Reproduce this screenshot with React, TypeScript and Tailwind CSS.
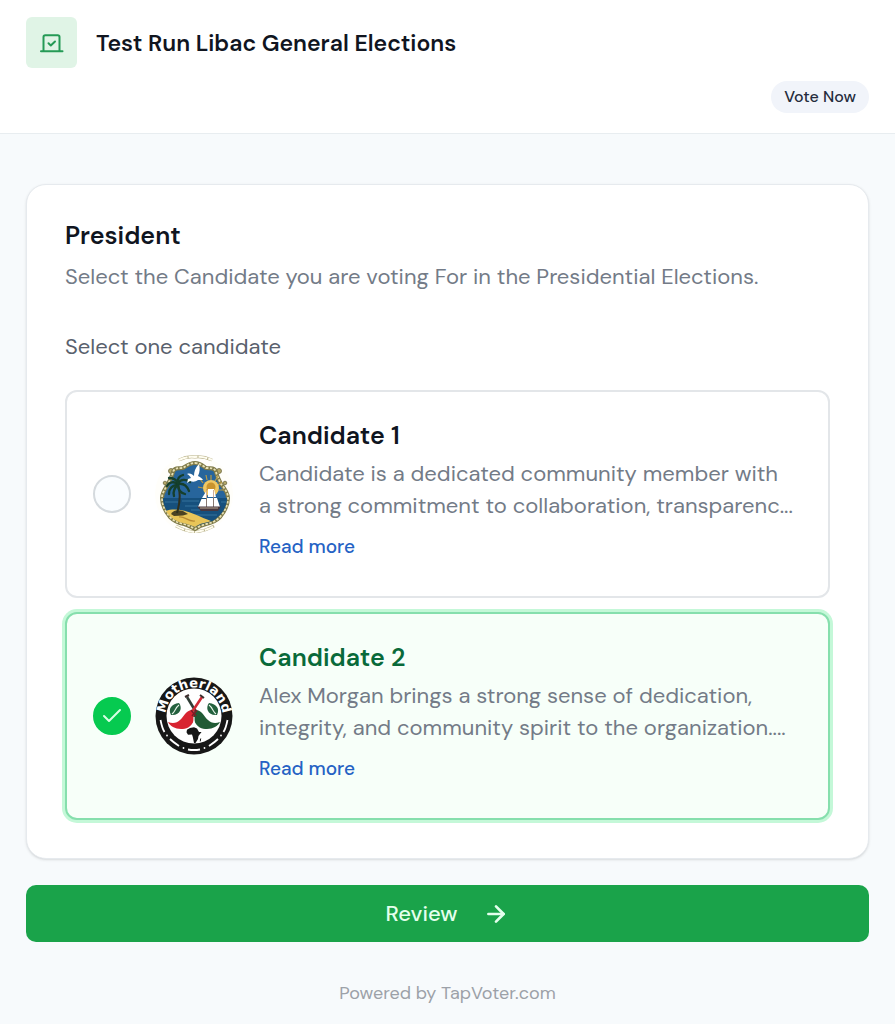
import { useState } from "react";
import type { ReactNode } from "react";
import { ArrowRight, Check } from "lucide-react";

function BallotIcon() {
  return (
    <svg viewBox="0 0 24 24" className="size-6" fill="none" stroke="#259a56" strokeWidth="2" strokeLinecap="round" strokeLinejoin="round" aria-hidden="true">
      <path d="M3.500 20V6a1.800 1.800 0 0 1 1.800-1.800h12.400A1.800 1.800 0 0 1 19.500 6v14" />
      <path d="M1 20.300h21.500" />
      <path d="m8.500 12.300 2.300 2.200 4.200-4" />
    </svg>
  );
}

const crestOutline =
  "M40 8c5 0 8 3 11 5 5 0 9 0 10 4 1 4 3 8 5 12 4 5 7 9 7 14 0 7-3 13-8 19-5 5-9 6-14 7-4 1-8 3-11 5-4-2-7-4-11-5-6-1-10-3-14-7-5-6-8-12-8-19 0-5 3-9 6-14 2-4 4-8 5-12 1-4 5-4 10-4 3-2 7-5 12-5Z";

function CoastEmblem() {
  return (
    <svg viewBox="0 0 78 78" className="size-[78px] shrink-0" role="img" aria-label="Coastal emblem">
      <circle cx="39" cy="39" r="39" fill="#fffefa" />
      <path d="M24 5q8-4 16-3 8-1 17 3M21 71q9 5 19 6 10-1 19-6" fill="none" stroke="#b9b28c" strokeWidth="3" />
      <path d="M24 5q8-4 16-3 8-1 17 3M21 71q9 5 19 6 10-1 19-6" fill="none" stroke="#fffdf0" strokeWidth="2" strokeDasharray="9 1" />
      <g fill="#b5a768" stroke="#6f6b42" strokeWidth="0.800">
        <circle cx="16" cy="16" r="2.500" />
        <circle cx="64" cy="16" r="2.500" />
        <circle cx="10" cy="28" r="1.800" />
        <circle cx="70" cy="28" r="1.800" />
      </g>
      <path d={crestOutline} fill="#27659c" stroke="#7f7a48" strokeWidth="4" />
      <path d={crestOutline} fill="none" stroke="#e6dfb4" strokeWidth="1.800" strokeDasharray="2.500 1.500" />
      <path d="M8 43h64c0 7-3 13-8 18-4 4-8 6-13 7-4 1-8 2-11 4-4-2-7-3-11-4-5-1-9-3-13-7-5-5-8-11-8-18Z" fill="#16507d" />
      <path d="M10 47h13M27 46h17M66 47h5M30 51h14M40 60h22M36 55h9" stroke="#3d7ca4" strokeWidth="0.800" />
      <path d="M48 28l-3-4M52 25l-1-5M56 25v-5M60 26l3-5M63 30l4-3M48 33l-5-1M64 35h5" stroke="#b99a45" strokeWidth="1.200" />
      <circle cx="56" cy="33" r="8" fill="#f0c763" />
      <circle cx="56" cy="32" r="4.500" fill="#c9932e" />
      <path d="M11 56c7-3 19-1 28 3 7 3 12 5 17 7-5 2-11 2-16 6-4-2-8-3-12-4-6-1-13-5-17-12Z" fill="#e9c558" />
      <path d="M24 62c6-1 9 5 16 4" fill="none" stroke="#b88a33" strokeWidth="1.200" />
      <path d="M16 59c3-5 8-4 12-3l5 3-5 1.500-9 .5Z" fill="#4b4222" />
      <path d="M22 58c3-10 4-19 1-29" fill="none" stroke="#2f301d" strokeWidth="2" />
      <g fill="none" stroke="#153f2c" strokeWidth="2.300" strokeLinecap="round">
        <path d="M23 29c-4-3-9-2-11 2" />
        <path d="M23 30c-6 0-9 4-9 9" />
        <path d="M23 30c-4 3-5 7-4 11" />
        <path d="M23 30c0 5 3 8 7 9" />
        <path d="M23 29c5-1 9 2 11 7" />
        <path d="M23 28c3-4 8-4 12-1" />
        <path d="M23 28c-1-4 1-7 5-8" />
        <path d="M23 28c-2-4-5-5-9-5" />
      </g>
      <path d="M32 19c3-1 5 0 7 2 0-4 1-8 5-12 1 4 1 8-1 12 2 1 4 2 5 4l-5 0c-3 2-5 2-8 1l-3 2 1-4 3-1c-1-2-2-3-4-4Z" fill="#fff" />
      <path d="m52 35-5 8h5ZM53 34h6l2 8h-8ZM46.500 44l-3.500 8h8v-8ZM52 43v9h6v-9ZM59 43v9h6l-3-9Z" fill="#fff" />
      <path d="M51.500 34v18M58.500 35v17" stroke="#b98a6b" strokeWidth="0.700" />
      <path d="m42 51.500 24 0-3 4.500H46Z" fill="#473740" />
      <path d="M45 53h18" stroke="#d9c5a5" strokeWidth="0.800" />
    </svg>
  );
}

function MotherlandEmblem() {
  return (
    <svg viewBox="0 0 78 78" className="size-[78px] shrink-0 overflow-visible" role="img" aria-label="Motherland emblem">
      <circle cx="39" cy="39" r="38.500" fill="#171717" />
      <circle cx="39" cy="39" r="27.500" fill="#fff" />
      <path id="name-arc" d="M10.500 39a28.500 28.500 0 0 1 57 0" fill="none" />
      <text fill="#fff" fontFamily="DejaVu Sans, sans-serif" fontSize="13" fontWeight="700" textAnchor="middle">
        <textPath href="#name-arc" startOffset="50%">Motherland</textPath>
      </text>
      <path d="M5.500 43c1 5 2 9 4 12M15 62c3 3 6 5 9 7M33 72.500c4 .7 8 .7 12 0M54 69c3-2 6-4 9-7M68.500 55c2-3 3-7 4-12" fill="none" stroke="#fff" strokeWidth="1.800" />
      <g fill="#fff">
        <circle cx="12" cy="58.500" r="0.900" />
        <circle cx="28.500" cy="71" r="0.900" />
        <circle cx="49.500" cy="71" r="0.900" />
        <circle cx="66" cy="58.500" r="0.900" />
      </g>
      <path d="M16 38c-3-6 0-11 8-12 4 5 1 13-8 12ZM62 38c3-6 0-11-8-12-4 5-1 13 8 12Z" fill="#24613f" />
      <path d="M17 37c3-2 3-6 7-9M61 37c-3-2-3-6-7-9" fill="none" stroke="#e7f3e9" strokeWidth="1.100" />
      <path d="m32 20 9 15" stroke="#2f3d36" strokeWidth="2.600" />
      <path d="m47 20-10 15" stroke="#d02a35" strokeWidth="2.600" />
      <path d="m30 20 4-2M45 18l4 3" stroke="#3b2c2c" strokeWidth="2" />
      <path d="M37 33c2 3 3 7 2 10-3 8-8 9-13 9-6 0-11-3-13-7 5 2 9 1 12-2 4-3 5-9 12-10Z" fill="#d82431" />
      <path d="M41 33c-2 3-3 7-2 10 3 8 8 9 13 9 6 0 11-3 13-7-5 2-9 1-12-2-4-3-5-9-12-10Z" fill="#215b35" />
      <path d="m36 33 5 6M42 33l-5 6" stroke="#7d1d26" strokeWidth="1.600" />
      <path d="M39 40v6" stroke="#fff" strokeWidth="1.200" />
      <path d="m35 51 4-.7 3 1.200 2 3.500h2.500l-3 4-.500 3-2.500 4h-1.500l-1.200-6-.8-2.500-4 .3-1.500-2.500.5-2.500Z" fill="#151515" />
      <path d="m45 62 1.200-1-.4 3-1 .8Z" fill="#151515" />
    </svg>
  );
}

type Candidate = { id: string; name: string; bio: string; emblem: ReactNode };

const candidates: Candidate[] = [
  {
    id: "candidate-1",
    name: "Candidate 1",
    bio: "Candidate is a dedicated community member with a\u00a0strong commitment to collaboration, transparenc...",
    emblem: <CoastEmblem />,
  },
  {
    id: "candidate-2",
    name: "Candidate 2",
    bio: "Alex Morgan brings a strong sense of dedication, integrity, and community spirit to the organization....",
    emblem: <MotherlandEmblem />,
  },
];

function CandidateOption({ candidate, selected, onSelect }: { candidate: Candidate; selected: boolean; onSelect: () => void }) {
  return (
    <div
      className={
        selected
          ? "flex items-center rounded-xl border-2 border-[#86dfad] bg-[#f7fff9] px-[26px] py-[26px] ring-3 ring-[#c4f8d8]"
          : "flex items-center rounded-xl border-2 border-[#e3e6e9] bg-white px-[26px] py-[26px]"
      }
    >
      <span className="relative flex size-[38px] shrink-0">
        <input
          type="radio"
          name="president"
          id={candidate.id}
          checked={selected}
          onChange={onSelect}
          className="size-full appearance-none rounded-full border-2 border-[#d5dade] bg-[#fafdff] checked:border-[#06ca50] checked:bg-[#06ca50]"
        />
        {selected && <Check className="pointer-events-none absolute inset-0 m-auto size-6 text-[#d8ffe5]" strokeWidth={2} />}
      </span>
      <div className="ml-6 shrink-0">{candidate.emblem}</div>
      <div className="ml-[26px] min-w-0 flex-1 pb-2">
        <label htmlFor={candidate.id} className={selected ? "block text-[25px] leading-9 font-semibold text-[#096a3a]" : "block text-[25px] leading-9 font-semibold text-[#10151f]"}>
          {candidate.name}
        </label>
        <p className="mt-1 -mr-3 line-clamp-2 text-[22px] leading-8 text-[#737b87]">{candidate.bio}</p>
        <button type="button" className="mt-2.5 block text-[19px] leading-[30px] font-medium text-[#2562c4]">
          Read more
        </button>
      </div>
    </div>
  );
}

export default function App() {
  const [choice, setChoice] = useState("candidate-2");

  return (
    <div className="min-h-screen bg-[#f7fafc] font-['DM_Sans','Inter',sans-serif]">
      <header className="flex flex-col border-b border-[#e8edf0] bg-white px-[26px] pt-[17px] pb-5">
        <div className="flex items-center gap-[19px]">
          <div className="flex size-[51px] shrink-0 items-center justify-center rounded-md bg-[#e0f4e6]">
            <BallotIcon />
          </div>
          <h1 className="text-[23px] leading-8 font-semibold text-[#10151f]">Test Run Libac General Elections</h1>
        </div>
        <span className="mt-[13px] self-end rounded-full bg-[#f1f4fa] px-[13px] text-base leading-8 font-medium text-[#252c3d]">Vote Now</span>
      </header>

      <main className="px-[26px] pt-[50px]">
        <section className="rounded-[20px] border border-[#e6eaee] bg-white px-[38px] pt-[35px] pb-[38px] shadow-sm">
          <h2 className="text-[25px] leading-8 font-semibold text-[#10151f]">President</h2>
          <p className="mt-[9px] text-[22px] leading-8 text-[#737b87]">Select the Candidate you are voting For in the Presidential Elections.</p>
          <fieldset className="mt-[38px]">
            <legend className="text-[22px] leading-8 text-[#59616d]">Select one candidate</legend>
            <div className="mt-[27px] flex flex-col gap-3.5">
              {candidates.map((candidate) => (
                <CandidateOption key={candidate.id} candidate={candidate} selected={choice === candidate.id} onSelect={() => setChoice(candidate.id)} />
              ))}
            </div>
          </fieldset>
        </section>

        <button type="button" className="mt-[26px] flex w-full items-center justify-center gap-[26px] rounded-[10px] bg-[#1aa34a] py-3 text-[22px] leading-[33px] font-medium text-[#e4ffed]">
          Review
          <ArrowRight className="size-[26px]" strokeWidth={2.5} />
        </button>
      </main>

      <footer className="pt-[37px] pb-4 text-center text-lg leading-7 text-[#9ca1a8]">Powered by TapVoter.com</footer>
    </div>
  );
}
